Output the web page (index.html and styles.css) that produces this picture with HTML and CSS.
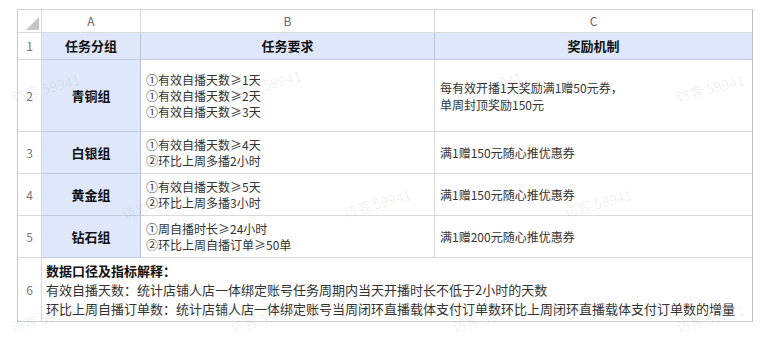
FILE: index.html
```html
<!DOCTYPE html>
<html lang="zh-CN">
<head>
<meta charset="utf-8">
<title>任务分组</title>
<link rel="stylesheet" href="styles.css">
</head>
<body>
<div class="sheet">
  <div class="grid">
    <div class="corner"><span class="tri"></span></div>
    <div class="colhead">A</div>
    <div class="colhead">B</div>
    <div class="colhead">C</div>

    <div class="rowhead">1</div>
    <div class="cell blue hdr">任务分组</div>
    <div class="cell blue hdr">任务要求</div>
    <div class="cell blue hdr">奖励机制</div>

    <div class="rowhead">2</div>
    <div class="cell blue grp">青铜组</div>
    <div class="cell txt"><div>①有效自播天数≥1天</div><div>①有效自播天数≥2天</div><div>①有效自播天数≥3天</div></div>
    <div class="cell txt reward"><div>每有效开播1天奖励满1赠50元券，</div><div>单周封顶奖励150元</div></div>

    <div class="rowhead">3</div>
    <div class="cell blue grp">白银组</div>
    <div class="cell txt"><div>①有效自播天数≥4天</div><div>②环比上周多播2小时</div></div>
    <div class="cell txt"><div>满1赠150元随心推优惠券</div></div>

    <div class="rowhead">4</div>
    <div class="cell blue grp">黄金组</div>
    <div class="cell txt"><div>①有效自播天数≥5天</div><div>②环比上周多播3小时</div></div>
    <div class="cell txt"><div>满1赠150元随心推优惠券</div></div>

    <div class="rowhead">5</div>
    <div class="cell blue grp">钻石组</div>
    <div class="cell txt"><div>①周自播时长≥24小时</div><div>②环比上周自播订单≥50单</div></div>
    <div class="cell txt"><div>满1赠200元随心推优惠券</div></div>

    <div class="rowhead">6</div>
    <div class="cell note">
      <div class="note-title">数据口径及指标解释：</div>
      <div>有效自播天数：统计店铺人店一体绑定账号任务周期内当天开播时长不低于2小时的天数</div>
      <div>环比上周自播订单数：统计店铺人店一体绑定账号当周闭环直播载体支付订单数环比上周闭环直播载体支付订单数的增量</div>
    </div>
  </div>

  <div class="watermarks" aria-hidden="true">
    <span class="wm wm1">访客 59941</span>
    <span class="wm wm2">访客 59941</span>
    <span class="wm wm3">访客 59941</span>
    <span class="wm wm4">访客 59941</span>
    <span class="wm wm5">访客 59941</span>
    <span class="wm wm6">访客 59941</span>
    <span class="wm wm7">访客 59941</span>
    <span class="wm wm8">访客 59941</span>
    <span class="wm wm9">访客 59941</span>
    <span class="wm wm10">访客 59941</span>
    <span class="wm wm11">访客 59941</span>
  </div>
</div>
</body>
</html>
```

FILE: styles.css
```css
html, body {
  margin: 0;
  padding: 0;
  background: #ffffff;
}

body {
  font-family: "Noto Sans CJK SC", "Noto Sans", "Liberation Sans", sans-serif;
  font-size: 12px;
  color: #333333;
}

.sheet {
  position: relative;
  padding: 9px 0 0 17px;
  width: 771px;
  height: 339px;
  box-sizing: border-box;
  overflow: hidden;
}

.grid {
  display: grid;
  grid-template-columns: 24px 99px 294px 318px;
  grid-template-rows: 23px 27px 72px 42px 42px 42px 64px;
  width: 736px;
  border-top: 1px solid #d6d6d6;
  border-left: 1px solid #c8c8c8;
}

.grid > div {
  box-sizing: border-box;
  border-right: 1px solid #dadada;
  border-bottom: 1px solid #dadada;
}

.corner {
  position: relative;
  border-right-color: #cfcfcf;
}

.tri {
  position: absolute;
  right: 2px;
  bottom: 2px;
  width: 0;
  height: 0;
  border-style: solid;
  border-width: 0 0 13px 13px;
  border-color: transparent transparent #c6c6c6 transparent;
}

.colhead {
  display: flex;
  align-items: center;
  justify-content: center;
  color: #666666;
  font-size: 12px;
  line-height: 1;
  padding-bottom: 1px;
}

.grid > .colhead:nth-child(4) {
  border-right-color: #bdbdbd;
}

.rowhead {
  display: flex;
  align-items: center;
  justify-content: center;
  color: #777777;
  font-size: 12px;
  line-height: 1;
}

.cell {
  display: flex;
  flex-direction: column;
  justify-content: center;
}

.grid > .blue {
  background: #dfe8fb;
  border-right-color: #b9c3d7;
  border-bottom-color: #c3ccdc;
}

.hdr,
.grp {
  align-items: center;
  text-align: center;
  font-weight: bold;
  font-size: 13px;
  color: #111111;
  line-height: 16px;
}

.hdr {
  padding-bottom: 1px;
}

.grid > .hdr:nth-child(8) {
  border-right-color: #bdbdbd;
}

.txt {
  padding-left: 5px;
  line-height: 16px;
  color: #333333;
}

.reward {
  line-height: 17px;
}

.grid > .txt:nth-child(4n) {
  border-right-color: #bdbdbd;
}

.grid > .note {
  grid-column: 2 / 5;
  padding-left: 4px;
  font-size: 13px;
  line-height: 19px;
  color: #333333;
  border-right-color: #bdbdbd;
  border-bottom-color: #cfcfcf;
}

.grid > .rowhead:nth-last-child(2) {
  border-bottom-color: #cfcfcf;
}

.note-title {
  font-weight: bold;
  color: #111111;
}

.watermarks {
  position: absolute;
  inset: 0;
  pointer-events: none;
}

.wm {
  position: absolute;
  font-size: 14px;
  line-height: 16px;
  color: rgba(0, 0, 0, 0.07);
  transform: translate(-50%, -50%) rotate(-15deg);
  white-space: nowrap;
}

.wm1 { left: 46px; top: 88px; }
.wm2 { left: 267px; top: 84px; }
.wm3 { left: 488px; top: 86px; }
.wm4 { left: 710px; top: 88px; }
.wm5 { left: 156px; top: 205px; }
.wm6 { left: 377px; top: 203px; }
.wm7 { left: 598px; top: 203px; }
.wm8 { left: 44px; top: 318px; }
.wm9 { left: 264px; top: 318px; }
.wm10 { left: 486px; top: 318px; }
.wm11 { left: 710px; top: 318px; }
```
